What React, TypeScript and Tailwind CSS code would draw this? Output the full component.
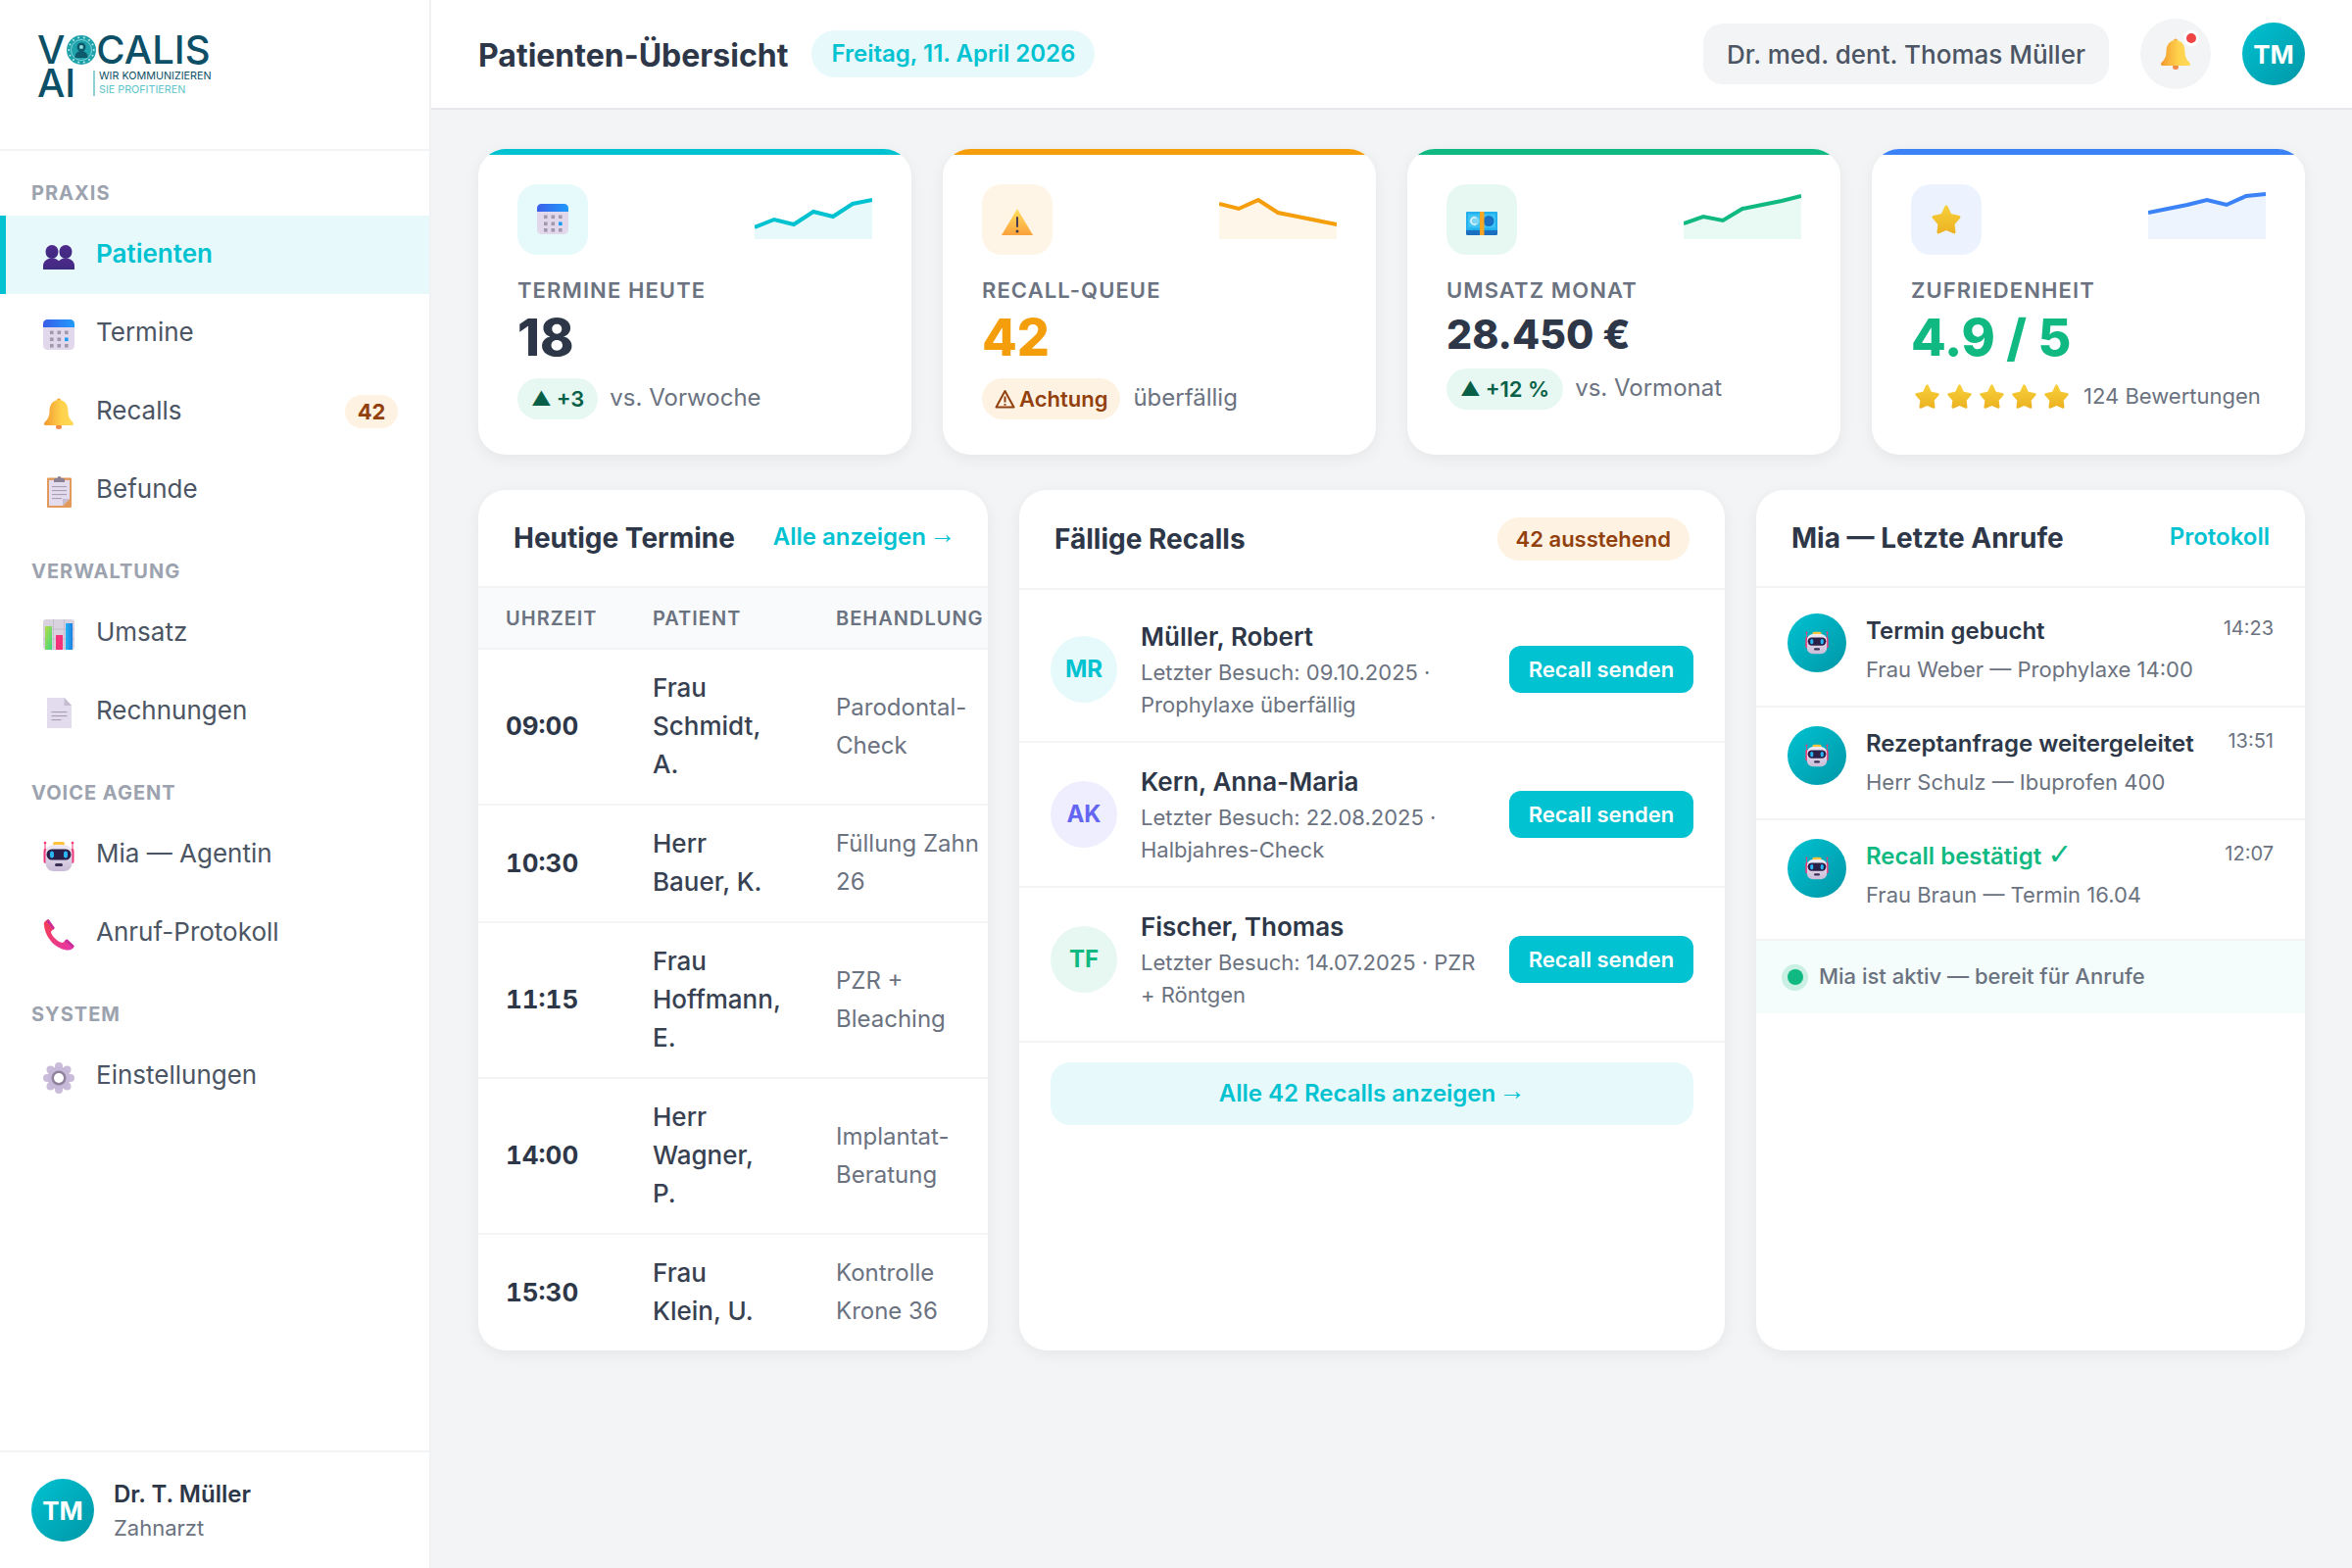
import React from 'react';

const font = { fontFamily: 'Inter, "Noto Sans", sans-serif' };

/* ---------- colour icons (fluent-emoji look) ---------- */

function IconPeople({ className = 'w-8 h-8' }: { className?: string }) {
  return (
    <svg viewBox="0 0 32 32" className={className}>
      <defs>
        <linearGradient id="ppl" x1="0" y1="0" x2="0" y2="1">
          <stop offset="0" stopColor="#4f2a8c" />
          <stop offset="1" stopColor="#3e2a7e" />
        </linearGradient>
      </defs>
      <ellipse cx="9" cy="11" rx="6.5" ry="7" fill="url(#ppl)" />
      <path d="M0 29v-4c0-4 4-7.5 9-7.5s9 3.500 9 7.500v4z" fill="url(#ppl)" />
      <ellipse cx="23" cy="11" rx="6.500" ry="7" fill="url(#ppl)" />
      <path d="M14 29v-4c0-4 4-7.500 9-7.500s9 3.500 9 7.500v4z" fill="url(#ppl)" />
    </svg>
  );
}

function IconCalendar({ className = 'w-8 h-8' }: { className?: string }) {
  const cols = [7, 14.5, 22];
  const rows = [11.5, 18.5, 25];
  return (
    <svg viewBox="0 0 32 32" className={className}>
      <defs>
        <linearGradient id="calTop" x1="0" y1="0" x2="1" y2="0">
          <stop offset="0" stopColor="#3a5ee8" />
          <stop offset="1" stopColor="#1f9bfb" />
        </linearGradient>
      </defs>
      <rect x="0" y="0" width="32" height="31" rx="4.500" fill="#e1d8ec" />
      <path d="M0 8V4.500A4.500 4.500 0 0 1 4.500 0h23A4.500 4.500 0 0 1 32 4.500V8z" fill="url(#calTop)" />
      {rows.map((y, r) =>
        cols.map((x, c) => (
          <rect key={`${r}-${c}`} x={x} y={y} width="3.600" height="3.600" fill={r === 1 && c === 2 ? '#1c9bf7' : '#a298ad'} />
        )),
      )}
    </svg>
  );
}

function IconBell({ className = 'w-8 h-8' }: { className?: string }) {
  return (
    <svg viewBox="0 0 32 32" className={className}>
      <defs>
        <linearGradient id="bell" x1="0" y1="0" x2="1" y2="0">
          <stop offset="0" stopColor="#f29a2e" />
          <stop offset="0.6" stopColor="#ffd24d" />
          <stop offset="1" stopColor="#ffd95a" />
        </linearGradient>
      </defs>
      <ellipse cx="16" cy="29.500" rx="3" ry="2.500" fill="#f08a4b" />
      <circle cx="16" cy="2.500" r="2" fill="#f5a63a" />
      <path d="M16 2c-6 0-9.500 5-9.500 11.500 0 5-1.500 8-5 11.500-1 1-.5 3 1 3h27c1.500 0 2-2 1-3-3.500-3.500-5-6.500-5-11.500C25.500 7 22 2 16 2z" fill="url(#bell)" />
    </svg>
  );
}

function IconClipboard({ className = 'w-8 h-8' }: { className?: string }) {
  return (
    <svg viewBox="0 0 32 32" className={className}>
      <rect x="4" y="1.500" width="25" height="30.500" rx="1" fill="#e19a5c" />
      <path d="M6 4h21v19l-7 7H6z" fill="#e3dcee" />
      <path d="M20 30v-7h7z" fill="#c6bcd2" />
      <rect x="9" y="10" width="15" height="1.100" fill="#a89fb2" />
      <rect x="9" y="14" width="15" height="1.100" fill="#a89fb2" />
      <rect x="9" y="18" width="15" height="1.100" fill="#a89fb2" />
      <rect x="9" y="22" width="10" height="1.100" fill="#a89fb2" />
      <path d="M11 6V3.500a1.500 1.500 0 0 1 1.500-1.500h2a2 2 0 0 1 4 0h2A1.500 1.500 0 0 1 22 3.500V6z" fill="#8b8093" />
    </svg>
  );
}

function IconBars({ className = 'w-8 h-8' }: { className?: string }) {
  return (
    <svg viewBox="0 0 32 32" className={className}>
      <defs>
        <linearGradient id="barG" x1="0" y1="0" x2="1" y2="1">
          <stop offset="0" stopColor="#b4dc4a" />
          <stop offset="1" stopColor="#3fd67c" />
        </linearGradient>
        <linearGradient id="barB" x1="0" y1="0" x2="1" y2="0">
          <stop offset="0" stopColor="#25b5f6" />
          <stop offset="1" stopColor="#1c7fdf" />
        </linearGradient>
      </defs>
      <rect x="0" y="0" width="32" height="31" rx="3" fill="#d9d3e0" />
      <path d="M0 10h32M0 20h32M10.500 0v31M21.500 0v31" stroke="#bdb5c6" strokeWidth="0.700" />
      <rect x="2" y="7" width="7" height="24" fill="url(#barG)" />
      <rect x="13" y="16" width="7" height="15" fill="#f4327a" />
      <rect x="23" y="4" width="7" height="27" fill="url(#barB)" />
    </svg>
  );
}

function IconPage({ className = 'w-8 h-8' }: { className?: string }) {
  return (
    <svg viewBox="0 0 32 32" className={className}>
      <path d="M4 0h18l7 7.500V31H4z" fill="#e3dcee" />
      <path d="M21.500 0L29 8h-7.500z" fill="#c6bcd2" />
      <rect x="8.500" y="14" width="16" height="1.100" fill="#a89fb2" />
      <rect x="8.500" y="18" width="16" height="1.100" fill="#a89fb2" />
      <rect x="8.500" y="22" width="10" height="1.100" fill="#a89fb2" />
    </svg>
  );
}

function IconRobot({ className = 'w-8 h-8' }: { className?: string }) {
  return (
    <svg viewBox="0 0 32 32" className={className}>
      <defs>
        <linearGradient id="robot" x1="0" y1="0" x2="0" y2="1">
          <stop offset="0" stopColor="#efeaf4" />
          <stop offset="1" stopColor="#c9bcd8" />
        </linearGradient>
      </defs>
      <path d="M2 2v8M30 2v8" stroke="#f0387a" strokeWidth="1" />
      <circle cx="2" cy="2" r="1.300" fill="#f0387a" />
      <circle cx="30" cy="2" r="1.300" fill="#f0387a" />
      <rect x="0.500" y="8" width="4" height="15" rx="2" fill="#f0387a" />
      <rect x="27.500" y="8" width="4" height="15" rx="2" fill="#f0387a" />
      <rect x="10" y="1" width="12" height="4" rx="2" fill="#fdc33c" />
      <rect x="2.500" y="4" width="27" height="27" rx="8" fill="url(#robot)" />
      <rect x="3.500" y="8.500" width="25" height="11" rx="5.500" fill="#2a1f47" />
      <rect x="7" y="10.500" width="4" height="7" rx="2" fill="#29b6f6" />
      <rect x="21" y="10.500" width="4" height="7" rx="2" fill="#29b6f6" />
      <rect x="12" y="23" width="8" height="3" rx="1.500" fill="#3a2f55" />
    </svg>
  );
}

function IconPhone({ className = 'w-8 h-8' }: { className?: string }) {
  return (
    <svg viewBox="0 0 32 32" className={className}>
      <defs>
        <linearGradient id="phone" x1="0" y1="0" x2="1" y2="1">
          <stop offset="0" stopColor="#f43f4e" />
          <stop offset="1" stopColor="#e636ac" />
        </linearGradient>
      </defs>
      <path d="M1 6C0 3.500 2.500 1 5.500 0l6 8.500c0 2.500-3.500 2.500-3.500 5 1 4 7.500 10 11.500 10.500 2 0 2.500-3 5-3.500l7 6.500c0 3-3.500 5-7.500 4.500C12 30 2 18 1 6z" fill="url(#phone)" />
      <path d="M5.500 0l6 8.500c0 1-.5 1.500-1.200 2L3 2z" fill="#c7309a" />
      <path d="M24.500 20.500l7 6.500c0 1-.4 1.700-1 2.500l-8.500-7.500c.7-.6 1.500-1.200 2.500-1.500z" fill="#c7309a" />
    </svg>
  );
}

function IconGear({ className = 'w-8 h-8' }: { className?: string }) {
  const teeth = [0, 45, 90, 135, 180, 225, 270, 315];
  return (
    <svg viewBox="0 0 32 32" className={className}>
      {teeth.map((a) => (
        <circle
          key={a}
          cx={16 + 12 * Math.cos((a * Math.PI) / 180)}
          cy={16 + 12 * Math.sin((a * Math.PI) / 180)}
          r="4"
          fill="#c9bddb"
        />
      ))}
      <circle cx="16" cy="16" r="11.500" fill="#c5b8d8" />
      <circle cx="16" cy="16" r="7.500" fill="#8f829f" />
      <circle cx="16" cy="16" r="5" fill="#ffffff" />
    </svg>
  );
}

function IconWarning({ className = 'w-8 h-8' }: { className?: string }) {
  return (
    <svg viewBox="0 0 32 32" className={className}>
      <defs>
        <linearGradient id="warn" x1="0" y1="0" x2="0" y2="1">
          <stop offset="0" stopColor="#ffe05f" />
          <stop offset="1" stopColor="#faa13c" />
        </linearGradient>
      </defs>
      <path d="M16 5L32 32H0z" fill="url(#warn)" />
      <rect x="15" y="13" width="2" height="11" rx="1" fill="#4a3a50" />
      <circle cx="16" cy="28" r="1.500" fill="#4a3a50" />
    </svg>
  );
}

function IconWarnOutline() {
  return (
    <svg viewBox="0 0 21 20" className="w-[21px] h-[20px] shrink-0">
      <path d="M10.500 2L19.500 18.500H1.500z" fill="none" stroke="#92400e" strokeWidth="2" strokeLinejoin="round" />
      <path d="M10.500 7.500v6M10.500 15v1.800" stroke="#92400e" strokeWidth="2" />
    </svg>
  );
}

function IconMoney({ className = 'w-8 h-8' }: { className?: string }) {
  return (
    <svg viewBox="0 0 32 32" className={className}>
      <rect x="0" y="8" width="32" height="24" rx="1.500" fill="#1a6fc0" />
      <rect x="0" y="8" width="32" height="19" rx="1.500" fill="#22b0ee" />
      <rect x="2" y="10.500" width="28" height="14" fill="#3cc3f5" />
      <circle cx="8.500" cy="17.500" r="5" fill="#7cd5f5" />
      <path d="M10.500 14.800a3.400 3.400 0 1 0 0 5.400" stroke="#e9f6fb" strokeWidth="1.200" fill="none" />
      <circle cx="23" cy="17.500" r="5.500" fill="#1a72c4" />
      <rect x="14" y="8" width="4.500" height="24" fill="#f6a623" />
    </svg>
  );
}

function IconStar({ className = 'w-8 h-8' }: { className?: string }) {
  return (
    <svg viewBox="0 0 32 32" className={className}>
      <defs>
        <linearGradient id="star" x1="0" y1="0" x2="0" y2="1">
          <stop offset="0" stopColor="#f7cf3a" />
          <stop offset="1" stopColor="#ecb322" />
        </linearGradient>
      </defs>
      <polygon
        points="16,3 20,11.500 29,13.500 23,20.500 24,29 16,25.500 8,29 9,20.500 3,13.500 12,11.500"
        fill="url(#star)"
        stroke="url(#star)"
        strokeWidth="3"
        strokeLinejoin="round"
      />
    </svg>
  );
}

function LogoGlobe() {
  const dots = Array.from({ length: 14 }, (_, i) => (i * 360) / 14);
  return (
    <svg viewBox="0 0 30 30" className="w-[30px] h-[30px] shrink-0 ml-[2px]">
      <circle cx="15" cy="15" r="15" fill="#1fa3ab" />
      <circle cx="15" cy="15" r="10.500" fill="none" stroke="#7fd3d6" strokeWidth="1" />
      {dots.map((a) => (
        <circle
          key={a}
          cx={15 + 12.8 * Math.cos((a * Math.PI) / 180)}
          cy={15 + 12.8 * Math.sin((a * Math.PI) / 180)}
          r="0.900"
          fill="#c9eff0"
        />
      ))}
      <circle cx="15" cy="12" r="4.500" fill="#0c5a6c" />
      <path d="M8.500 23c0-5 3-7 6.500-7s6.500 2 6.500 7z" fill="#0c5a6c" />
      <circle cx="15" cy="12" r="2" fill="#8fdde0" />
    </svg>
  );
}

/* ---------- sidebar ---------- */

type NavItem = { label: string; icon: React.ReactNode; active?: boolean; badge?: string };

const navSections: { title: string; items: NavItem[] }[] = [
  {
    title: 'PRAXIS',
    items: [
      { label: 'Patienten', icon: <IconPeople />, active: true },
      { label: 'Termine', icon: <IconCalendar /> },
      { label: 'Recalls', icon: <IconBell />, badge: '42' },
      { label: 'Befunde', icon: <IconClipboard /> },
    ],
  },
  {
    title: 'VERWALTUNG',
    items: [
      { label: 'Umsatz', icon: <IconBars /> },
      { label: 'Rechnungen', icon: <IconPage /> },
    ],
  },
  {
    title: 'VOICE AGENT',
    items: [
      { label: 'Mia — Agentin', icon: <IconRobot /> },
      { label: 'Anruf-Protokoll', icon: <IconPhone /> },
    ],
  },
  {
    title: 'SYSTEM',
    items: [{ label: 'Einstellungen', icon: <IconGear /> }],
  },
];

function Sidebar() {
  return (
    <aside className="w-[440px] shrink-0 h-full bg-white border-r-2 border-[#f0f1f3] flex flex-col">
      {/* Logo */}
      <div className="h-[154px] shrink-0 border-b-2 border-[#f3f4f6] pl-[38px] pt-[34px] text-[#0c4f66]">
        <div className="flex items-center h-[34px] text-[40px] leading-[34px] font-medium">
          <span>V</span>
          <LogoGlobe />
          <span>CALIS</span>
        </div>
        <div className="flex items-center h-[34px]">
          <span className="text-[40px] leading-[34px] font-medium w-[57px]">AI</span>
          <div className="border-l-2 border-[#8fd0d4] h-[26px] pl-[4px] flex flex-col justify-between">
            <span className="text-[10.75px] leading-[12px] whitespace-nowrap">WIR KOMMUNIZIEREN</span>
            <span className="text-[10.75px] leading-[12px] whitespace-nowrap text-[#5cc5c9]">SIE PROFITIEREN</span>
          </div>
        </div>
      </div>

      {/* Navigation */}
      <nav className="flex-1">
        {navSections.map((section) => (
          <div key={section.title}>
            <div className="pt-[29px] mb-[9px] pl-[32px] text-[20px] leading-[28px] font-bold tracking-[0.05em] text-[#9ca3af]">
              {section.title}
            </div>
            {section.items.map((item) => (
              <a
                key={item.label}
                href="#"
                className={
                  item.active
                    ? 'flex items-center h-[80px] border-l-[6px] border-[#00c2d1] bg-[#e8f9fb] pl-[38px] pr-[32px] gap-[22px] text-[#00c2d1] font-semibold text-[26px]'
                    : 'flex items-center h-[80px] border-l-[6px] border-transparent pl-[38px] pr-[32px] gap-[22px] text-[#4b5563] text-[26px]'
                }
              >
                <span className="shrink-0 w-8 h-8 mt-[3px]">{item.icon}</span>
                <span className="flex-1 mb-[4px]">{item.label}</span>
                {item.badge && (
                  <span className="w-[54px] h-[34px] rounded-full bg-[#fef3e2] text-[#92400e] text-[22px] font-bold flex items-center justify-center">
                    {item.badge}
                  </span>
                )}
              </a>
            ))}
          </div>
        ))}
      </nav>

      {/* User */}
      <div className="h-[120px] shrink-0 border-t-2 border-[#f3f4f6] pl-[32px] flex items-center gap-[20px]">
        <div className="w-[64px] h-[64px] rounded-full bg-gradient-to-br from-[#00c2d1] to-[#0097a7] text-white text-[26px] font-bold flex items-center justify-center">
          TM
        </div>
        <div>
          <div className="text-[24px] leading-[36px] font-semibold text-[#2d3748]">Dr. T. Müller</div>
          <div className="text-[22px] leading-[32px] text-[#6b7280]">Zahnarzt</div>
        </div>
      </div>
    </aside>
  );
}

/* ---------- top bar ---------- */

function Topbar() {
  return (
    <header className="h-[112px] shrink-0 bg-white border-b-2 border-[#e5e7eb] px-[48px] flex items-center">
      <h1 className="text-[32px] font-bold text-[#2d3748] mt-[3px]">Patienten-Übersicht</h1>
      <span className="ml-[24px] h-[48px] px-[20px] rounded-full bg-[#e8f9fb] text-[#00c2d1] text-[24px] font-semibold flex items-center">
        Freitag, 11. April 2026
      </span>
      <div className="ml-auto flex items-center gap-[32px]">
        <div className="h-[62px] px-[24px] rounded-[20px] bg-[#f3f4f6] text-[26px] font-medium text-[#4b5563] flex items-center">
          Dr. med. dent. Thomas Müller
        </div>
        <div className="relative w-[72px] h-[72px] rounded-full bg-[#f3f4f6] flex items-center justify-center">
          <IconBell className="w-[32px] h-[32px]" />
          <span className="absolute top-[12px] right-[12px] w-[16px] h-[16px] rounded-full bg-[#ef4444] border-[3px] border-white" />
        </div>
        <div className="w-[64px] h-[64px] rounded-full bg-gradient-to-br from-[#00c2d1] to-[#0097a7] text-white text-[26px] font-bold flex items-center justify-center">
          TM
        </div>
      </div>
    </header>
  );
}

/* ---------- stat cards ---------- */

function Sparkline({ ys, color }: { ys: number[]; color: string }) {
  const pts = ys.map((y, i) => `${i * 20},${y}`).join(' ');
  return (
    <svg width="120" height="56" viewBox="0 0 120 56" className="shrink-0">
      <polygon points={`0,56 ${pts} 120,56`} fill={color} fillOpacity="0.09" />
      <polyline points={pts} fill="none" stroke={color} strokeWidth="4" />
    </svg>
  );
}

function DeltaUp({ children }: { children: React.ReactNode }) {
  return (
    <span className="h-[42px] pl-[14px] pr-[14px] rounded-full bg-[#e7f7f1] text-[#065f46] text-[22px] font-semibold flex items-center gap-[5px] whitespace-nowrap">
      <span className="text-[20px]">▲</span>
      {children}
    </span>
  );
}

function StatCard({
  bar,
  iconBg,
  icon,
  spark,
  sparkColor,
  label,
  children,
}: {
  bar: string;
  iconBg: string;
  icon: React.ReactNode;
  spark: number[];
  sparkColor: string;
  label: string;
  children: React.ReactNode;
}) {
  return (
    <div className="h-[312px] bg-white rounded-[28px] overflow-hidden shadow-[0_4px_16px_rgba(0,0,0,0.06)]">
      <div className={`h-[6px] ${bar}`} />
      <div className="pt-[30px] px-[40px]">
        <div className="flex items-start justify-between h-[72px]">
          <div className={`w-[72px] h-[72px] rounded-[20px] flex items-center justify-center ${iconBg}`}>{icon}</div>
          <Sparkline ys={spark} color={sparkColor} />
        </div>
        <div className="mt-[22px] text-[22px] leading-[28px] font-semibold tracking-[0.05em] text-[#6b7280]">{label}</div>
        {children}
      </div>
    </div>
  );
}

function StatCards() {
  return (
    <div className="grid grid-cols-4 gap-[32px]">
      <StatCard
        bar="bg-[#00c2d1]"
        iconBg="bg-[#e6f9fb]"
        icon={<IconCalendar />}
        spark={[44, 36, 41, 28, 33, 20, 16]}
        sparkColor="#00c2d1"
        label="TERMINE HEUTE"
      >
        <div className="mt-[7px] text-[52px] leading-[56px] font-extrabold text-[#2d3748]">18</div>
        <div className="mt-[13px] flex items-center gap-[12px]">
          <DeltaUp>+3</DeltaUp>
          <span className="text-[24px] text-[#6b7280] mb-[2px]">vs. Vorwoche</span>
        </div>
      </StatCard>
      <StatCard
        bar="bg-[#f59e0b]"
        iconBg="bg-[#fef5e7]"
        icon={<IconWarning />}
        spark={[20, 25, 16, 29, 33, 37, 41]}
        sparkColor="#f59e0b"
        label="RECALL-QUEUE"
      >
        <div className="mt-[7px] text-[52px] leading-[56px] font-extrabold text-[#f59e0b]">42</div>
        <div className="mt-[13px] flex items-center gap-[13px]">
          <span className="h-[42px] px-[13px] rounded-full bg-[#fef3e2] text-[#92400e] text-[22px] font-semibold flex items-center gap-[4px] whitespace-nowrap">
            <IconWarnOutline />
            Achtung
          </span>
          <span className="text-[24px] text-[#6b7280] mb-[2px]">überfällig</span>
        </div>
      </StatCard>
      <StatCard
        bar="bg-[#10b981]"
        iconBg="bg-[#e7f7f1]"
        icon={<IconMoney />}
        spark={[40, 33, 37, 25, 21, 17, 12]}
        sparkColor="#10b981"
        label="UMSATZ MONAT"
      >
        <div className="mt-[7px] text-[41px] leading-[48px] font-extrabold text-[#2d3748]">28.450 €</div>
        <div className="mt-[11px] flex items-center gap-[12px]">
          <DeltaUp>+12 %</DeltaUp>
          <span className="text-[24px] text-[#6b7280] mb-[2px]">vs. Vormonat</span>
        </div>
      </StatCard>
      <StatCard
        bar="bg-[#3b82f6]"
        iconBg="bg-[#ecf2fe]"
        icon={<IconStar />}
        spark={[29, 25, 21, 16, 21, 12, 10]}
        sparkColor="#3b82f6"
        label="ZUFRIEDENHEIT"
      >
        <div className="mt-[7px] text-[52px] leading-[56px] font-extrabold text-[#10b981]">4.9 / 5</div>
        <div className="mt-[10px] flex items-center h-[42px] pl-[3px]">
          {[0, 1, 2, 3, 4].map((i) => (
            <span key={i} className="w-[33px] shrink-0">
              <IconStar className="w-[27px] h-[27px]" />
            </span>
          ))}
          <span className="ml-[8px] text-[22px] text-[#6b7280] whitespace-nowrap">124 Bewertungen</span>
        </div>
      </StatCard>
    </div>
  );
}

/* ---------- panels ---------- */

const appointments = [
  { time: '09:00', patient: 'Frau Schmidt, A.', treatment: 'Parodontal-Check' },
  { time: '10:30', patient: 'Herr Bauer, K.', treatment: 'Füllung Zahn 26' },
  { time: '11:15', patient: 'Frau Hoffmann, E.', treatment: 'PZR + Bleaching' },
  { time: '14:00', patient: 'Herr Wagner, P.', treatment: 'Implantat-Beratung' },
  { time: '15:30', patient: 'Frau Klein, U.', treatment: 'Kontrolle Krone 36' },
];

function Arrow() {
  return <span className="font-['Liberation_Sans'] text-[27px] leading-none align-[2px] -ml-[3px]">→</span>;
}

function AppointmentsPanel() {
  return (
    <section className="bg-white rounded-[28px] overflow-hidden shadow-[0_4px_16px_rgba(0,0,0,0.06)]">
      <div className="h-[100px] border-b-2 border-[#f3f4f6] px-[36px] flex items-center justify-between">
        <h2 className="text-[28px] font-bold text-[#2d3748]">Heutige Termine</h2>
        <a href="#" className="text-[24px] font-semibold text-[#00c2d1] mb-[3px] -mr-[3px]">Alle anzeigen <Arrow /></a>
      </div>
      <table className="w-full table-fixed">
        <colgroup>
          <col className="w-[150px]" />
          <col className="w-[187px]" />
          <col className="w-[183px]" />
        </colgroup>
        <thead>
          <tr className="h-[62px] bg-[#f9fafb] border-b-2 border-[#f3f4f6] text-left text-[20px] font-semibold tracking-[0.05em] text-[#6b7280]">
            <th className="pl-[28px] font-semibold">UHRZEIT</th>
            <th className="pl-[28px] font-semibold">PATIENT</th>
            <th className="pl-[28px] font-semibold whitespace-nowrap">BEHANDLUNG</th>
          </tr>
        </thead>
        <tbody>
          {appointments.map((a, i) => (
            <tr key={a.time} className={i < appointments.length - 1 ? 'border-b-2 border-[#f3f4f6]' : ''}>
              <td className="pl-[28px] pt-[19px] pb-[21px] text-[26px] leading-[39px] font-bold tabular-nums text-[#2d3748]">{a.time}</td>
              <td className="pl-[28px] pr-[28px] pt-[19px] pb-[21px] text-[26px] leading-[39px] font-medium text-[#374151]">{a.patient}</td>
              <td className="pl-[28px] pr-[4px] pt-[19px] pb-[21px] text-[24px] leading-[39px] text-[#6b7280]">{a.treatment}</td>
            </tr>
          ))}
        </tbody>
      </table>
    </section>
  );
}

const recalls = [
  { initials: 'MR', bg: 'bg-[#e6f9fb]', fg: 'text-[#00c2d1]', name: 'Müller, Robert', info: 'Letzter Besuch: 09.10.2025 · Prophylaxe überfällig' },
  { initials: 'AK', bg: 'bg-[#efeefe]', fg: 'text-[#6366f1]', name: 'Kern, Anna-Maria', info: 'Letzter Besuch: 22.08.2025 · Halbjahres-Check' },
  { initials: 'TF', bg: 'bg-[#e7f7f1]', fg: 'text-[#10b981]', name: 'Fischer, Thomas', info: 'Letzter Besuch: 14.07.2025 · PZR + Röntgen' },
];

function RecallsPanel() {
  return (
    <section className="bg-white rounded-[28px] overflow-hidden shadow-[0_4px_16px_rgba(0,0,0,0.06)]">
      <div className="border-b-2 border-[#f3f4f6] px-[36px] py-[28px] flex items-center justify-between">
        <h2 className="text-[28px] font-bold text-[#2d3748]">Fällige Recalls</h2>
        <span className="h-[44px] px-[19px] rounded-full bg-[#fef3e2] text-[#92400e] text-[22px] font-semibold flex items-center">
          42 ausstehend
        </span>
      </div>
      <div className="pt-[8px] pb-[10px]">
        {recalls.map((r, i) => (
          <div
            key={r.initials}
            className={
              i < recalls.length - 1
                ? 'flex items-center gap-[24px] px-[32px] py-[20px] border-b-2 border-[#f3f4f6]'
                : 'flex items-center gap-[24px] px-[32px] py-[20px]'
            }
          >
            <div className={`w-[68px] h-[68px] shrink-0 rounded-full flex items-center justify-center text-[24px] font-bold ${r.bg} ${r.fg}`}>
              {r.initials}
            </div>
            <div className="flex-1 min-w-0">
              <div className="text-[26px] leading-[40px] font-semibold text-[#2d3748]">{r.name}</div>
              <div className="text-[22px] leading-[33px] text-[#6b7280]">{r.info}</div>
            </div>
            <button className="w-[188px] h-[48px] shrink-0 rounded-[12px] bg-[#00c2d1] text-white text-[22px] font-semibold">
              Recall senden
            </button>
          </div>
        ))}
      </div>
      <div className="border-t-2 border-[#f3f4f6] px-[32px] pt-[20px]">
        <button className="w-full h-[64px] rounded-[20px] bg-[#e8f9fb] text-[#00c2d1] text-[24px] font-semibold">
          Alle 42 Recalls anzeigen <Arrow />
        </button>
      </div>
    </section>
  );
}

const calls = [
  { title: 'Termin gebucht', check: false, sub: 'Frau Weber — Prophylaxe 14:00', time: '14:23', ok: false },
  { title: 'Rezeptanfrage weitergeleitet', check: false, sub: 'Herr Schulz — Ibuprofen 400', time: '13:51', ok: false },
  { title: 'Recall bestätigt ', check: true, sub: 'Frau Braun — Termin 16.04', time: '12:07', ok: true },
];

function CallsPanel() {
  return (
    <section className="bg-white rounded-[28px] overflow-hidden shadow-[0_4px_16px_rgba(0,0,0,0.06)]">
      <div className="h-[100px] border-b-2 border-[#f3f4f6] px-[36px] flex items-center justify-between">
        <h2 className="text-[28px] font-bold text-[#2d3748]">Mia — Letzte Anrufe</h2>
        <a href="#" className="text-[24px] font-semibold text-[#00c2d1] mb-[3px]">Protokoll</a>
      </div>
      <div className="pt-[7px] pb-[8px]">
        {calls.map((c, i) => (
          <div
            key={c.time}
            className={
              i < calls.length - 1
                ? 'flex items-start gap-[20px] px-[32px] py-[19px] border-b-2 border-[#f3f4f6]'
                : 'flex items-start gap-[20px] px-[32px] py-[19px]'
            }
          >
            <div className="w-[60px] h-[60px] shrink-0 rounded-full bg-gradient-to-br from-[#00c2d1] to-[#0097a7] flex items-center justify-center">
              <IconRobot className="w-[24px] h-[24px]" />
            </div>
            <div className="flex-1 min-w-0">
              <div className={c.ok ? 'text-[24px] leading-[36px] font-semibold text-[#10b981]' : 'text-[24px] leading-[36px] font-semibold text-[#2d3748]'}>
                {c.title}
                {c.check && <span className="font-['DejaVu_Sans'] text-[30px] leading-none">✓</span>}
              </div>
              <div className="mt-[3px] text-[22px] leading-[36px] text-[#6b7280]">{c.sub}</div>
            </div>
            <div className="text-[20px] leading-[30px] text-[#6b7280] shrink-0">{c.time}</div>
          </div>
        ))}
      </div>
      <div className="h-[76px] bg-[#f4fdfb] border-t-2 border-[#f3f4f6] pl-[26px] flex items-center gap-[11px]">
        <span className="w-[27px] h-[27px] rounded-full bg-[#c9f0e3] flex items-center justify-center">
          <span className="w-[16px] h-[16px] rounded-full bg-[#10b981]" />
        </span>
        <span className="text-[22px] font-medium text-[#6b7280] mb-[2px]">Mia ist aktiv — bereit für Anrufe</span>
      </div>
    </section>
  );
}

export default function App() {
  return (
    <div className="flex h-[1600px] bg-[#f3f4f6] overflow-hidden" style={font}>
      <Sidebar />
      <main className="flex-1 min-w-0 flex flex-col">
        <Topbar />
        <div className="px-[48px] pt-[40px]">
          <StatCards />
          <div className="mt-[36px] grid grid-cols-[520px_720px_560px] gap-[32px] h-[878px]">
            <AppointmentsPanel />
            <RecallsPanel />
            <CallsPanel />
          </div>
        </div>
      </main>
    </div>
  );
}
